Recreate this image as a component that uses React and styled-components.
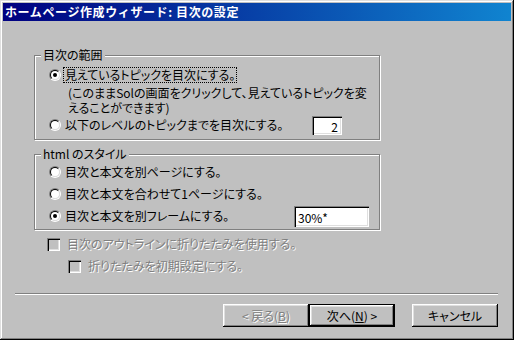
import React from 'react';
import styled, { createGlobalStyle } from 'styled-components';

const GlobalStyle = createGlobalStyle`
  html, body {
    margin: 0;
    padding: 0;
    background: #c0c0c0;
  }
`;

const Window = styled.div`
  box-sizing: border-box;
  width: 514px;
  height: 340px;
  padding: 3px;
  display: flex;
  flex-direction: column;
  background: #c0c0c0;
  box-shadow: inset -1px -1px #000, inset 1px 1px #dfdfdf,
    inset -2px -2px #808080, inset 2px 2px #fff;
  font-family: "Noto Sans CJK JP", "Noto Sans", sans-serif;
  font-size: 12px;
  font-feature-settings: "palt" 1;
  color: #000;
`;

const TitleBar = styled.div`
  height: 18px;
  padding-left: 2px;
  background: linear-gradient(to right, #000080, #1084d0);
  color: #fff;
  font-weight: bold;
  font-feature-settings: normal;
  letter-spacing: 0.6px;
  line-height: 18px;
  white-space: nowrap;
`;

const Body = styled.div`
  flex: 1;
  display: flex;
  flex-direction: column;
  padding: 0 13px 0 12px;
`;

const Group = styled.fieldset`
  box-sizing: border-box;
  width: 346px;
  min-width: 0;
  margin: ${p => p.$top}px 0 0 19px;
  padding: 0;
  border: 1px solid #808080;
  box-shadow: inset 1px 1px #fff, 1px 1px #fff;
`;

const Legend = styled.legend`
  margin-left: 6px;
  padding: 0 2px;
  line-height: 14px;
  background: #c0c0c0;
`;

const GroupBody = styled.div`
  padding: ${p => p.$pad};
`;

const Row = styled.div`
  display: flex;
  align-items: center;
  height: ${p => p.$h}px;
  padding-left: ${p => p.$indent || 0}px;
`;

const Radio = styled.span`
  position: relative;
  box-sizing: border-box;
  flex: none;
  width: 12px;
  height: 12px;
  border-radius: 50%;
  border: 1px solid;
  border-color: #808080 #fff #fff #808080;

  &::before {
    content: '';
    position: absolute;
    inset: 0;
    box-sizing: border-box;
    border-radius: 50%;
    border: 1px solid;
    border-color: #000 #dfdfdf #dfdfdf #000;
    background: #fff;
  }

  &::after {
    content: '';
    display: ${p => (p.$checked ? 'block' : 'none')};
    position: absolute;
    left: 3px;
    top: 3px;
    width: 4px;
    height: 4px;
    border-radius: 50%;
    background: #000;
  }
`;

const Label = styled.span`
  margin-left: 2px;
  padding: 0 1px;
  border: 1px ${p => (p.$focus ? 'dotted #000' : 'solid transparent')};
  line-height: 14px;
  white-space: nowrap;
`;

const Note = styled.div`
  padding-left: 19px;
  line-height: 15px;
  white-space: nowrap;
`;

const TextBox = styled.input`
  box-sizing: border-box;
  width: ${p => p.$w}px;
  height: ${p => p.$h}px;
  margin: 0 ${p => p.$right}px 0 auto;
  padding: 2px 4px 0 4px;
  border: none;
  outline: none;
  background: #fff;
  box-shadow: inset 1px 1px #808080, inset 2px 2px #000,
    inset -1px -1px #fff, inset -2px -2px #dfdfdf;
  font: inherit;
  font-size: 12px;
  line-height: 14px;
  text-align: ${p => p.$align};
  color: #000;
`;

const Check = styled.span`
  box-sizing: border-box;
  flex: none;
  width: 13px;
  height: 13px;
  background: #c0c0c0;
  box-shadow: inset 1px 1px #808080, inset 2px 2px #000,
    inset -1px -1px #fff, inset -2px -2px #dfdfdf;
`;

const Dim = styled.span`
  margin-left: ${p => p.$gap}px;
  line-height: 14px;
  white-space: nowrap;
  color: #808080;
  text-shadow: 1px 1px #fff;
`;

const Separator = styled.div`
  margin-top: 16px;
  border-top: 1px solid #808080;
  border-bottom: 1px solid #fff;
`;

const ButtonRow = styled.div`
  display: flex;
  justify-content: flex-end;
  margin-top: 9px;
`;

const Button = styled.button`
  box-sizing: border-box;
  width: 86px;
  height: 23px;
  margin-left: ${p => p.$gap || 0}px;
  padding: 0;
  border: ${p => (p.$default ? '1px solid #000' : 'none')};
  background: #c0c0c0;
  box-shadow: inset -1px -1px #000, inset 1px 1px #fff,
    inset -2px -2px #808080, inset 2px 2px #dfdfdf;
  font: inherit;
  font-size: 12px;
  color: ${p => (p.disabled ? '#808080' : '#000')};
  text-shadow: ${p => (p.disabled ? '1px 1px #fff' : 'none')};
`;

const App = () => (
  <>
    <GlobalStyle />
    <Window>
      <TitleBar>ホームページ作成ウィザード: 目次の設定</TitleBar>
      <Body>
        <Group $top={27}>
          <Legend>目次の範囲</Legend>
          <GroupBody $pad="3px 0 4px 14px">
            <Row $h={20}>
              <Radio $checked />
              <Label $focus>見えているトピックを目次にする。</Label>
            </Row>
            <Note>
              (このままSolの画面をクリックして、見えているトピックを変
              <br />
              えることができます)
            </Note>
            <Row $h={20}>
              <Radio />
              <Label>以下のレベルのトピックまでを目次にする。</Label>
              <TextBox readOnly value="2" $w={30} $h={19} $right={37} $align="right" />
            </Row>
          </GroupBody>
        </Group>

        <Group $top={7}>
          <Legend>html のスタイル</Legend>
          <GroupBody $pad="0 0 2px 14px">
            <Row $h={22}>
              <Radio />
              <Label>目次と本文を別ページにする。</Label>
            </Row>
            <Row $h={22}>
              <Radio />
              <Label>目次と本文を合わせて1ページにする。</Label>
            </Row>
            <Row $h={22}>
              <Radio $checked />
              <Label>目次と本文を別フレームにする。</Label>
              <TextBox readOnly value="30%*" $w={75} $h={21} $right={10} $align="left" />
            </Row>
          </GroupBody>
        </Group>

        <Row $h={22} $indent={32} style={{ marginTop: 3 }}>
          <Check />
          <Dim $gap={7}>目次のアウトラインに折りたたみを使用する。</Dim>
        </Row>
        <Row $h={22} $indent={53}>
          <Check />
          <Dim $gap={7}>折りたたみを初期設定にする。</Dim>
        </Row>

        <Separator />

        <ButtonRow>
          <Button disabled>&lt; 戻る(<u>B</u>)</Button>
          <Button $default>次へ(<u>N</u>) &gt;</Button>
          <Button $gap={17}>キャンセル</Button>
        </ButtonRow>
      </Body>
    </Window>
  </>
);

export default App;
